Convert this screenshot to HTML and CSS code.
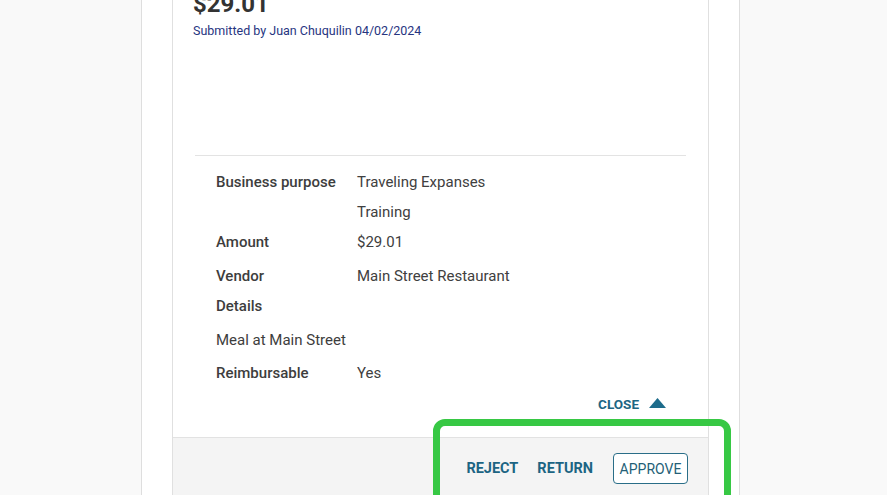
FILE: index.html
```html
<!DOCTYPE html>
<html lang="en">
<head>
<meta charset="utf-8">
<title>Expense approval</title>
<link rel="stylesheet" href="styles.css">
</head>
<body>
<div class="panel">
  <div class="card">
    <div class="card-head">
      <h1 class="amount">$29.01</h1>
      <p class="submitted">Submitted by Juan Chuquilin 04/02/2024</p>
    </div>
    <div class="divider"></div>
    <div class="details">
      <div class="row"><span class="label">Business purpose</span><span class="value">Traveling Expanses</span></div>
      <div class="row"><span class="label"></span><span class="value">Training</span></div>
      <div class="row"><span class="label">Amount</span><span class="value">$29.01</span></div>
      <div class="row gap"><span class="label">Vendor</span><span class="value">Main Street Restaurant</span></div>
      <div class="row"><span class="label">Details</span><span class="value"></span></div>
      <div class="row gap"><span class="plain">Meal at Main Street</span></div>
      <div class="row gap-s"><span class="label">Reimbursable</span><span class="value">Yes</span></div>
    </div>
    <div class="close-row">
      <button class="close-btn">CLOSE <svg class="caret" width="17" height="10" viewBox="0 0 17 10"><path d="M8.5 0 L17 10 L0 10 Z" fill="#1d6c8b"/></svg></button>
    </div>
    <div class="footer">
      <button class="act">REJECT</button>
      <button class="act">RETURN</button>
      <button class="approve">APPROVE</button>
    </div>
  </div>
</div>
<div class="highlight"></div>
</body>
</html>
```
FILE: styles.css
```css
html, body {
  margin: 0;
  padding: 0;
}
body {
  background: #f9f9f9;
  font-family: Roboto, "Liberation Sans", sans-serif;
  height: 495px;
  overflow: hidden;
  position: relative;
}
.panel {
  margin-left: 141px;
  width: 567px;
  height: 495px;
  background: #ffffff;
  border-left: 1px solid #dedede;
  border-right: 1px solid #dedede;
  padding-left: 30px;
  box-sizing: content-box;
}
.card {
  width: 535px;
  height: 560px;
  background: #ffffff;
  border-left: 1px solid #e0e0e0;
  border-right: 1px solid #e0e0e0;
  display: flex;
  flex-direction: column;
}
.card-head {
  padding-left: 20px;
  height: 155px;
}
.amount {
  margin: -10px 0 0 0;
  font-size: 24px;
  line-height: 28px;
  font-weight: 700;
  color: #333333;
}
.submitted {
  margin: 5px 0 0 0;
  font-size: 12.5px;
  line-height: 16px;
  color: #27357f;
}
.divider {
  height: 1px;
  background: #e3e3e3;
  margin: 0 22px;
}
.details {
  padding: 11px 0 0 43px;
}
.row {
  display: grid;
  grid-template-columns: 141px 1fr;
  height: 30px;
  line-height: 30px;
  font-size: 15px;
  color: #3b3b3b;
}
.row.gap { margin-top: 4px; }
.row.gap-s { margin-top: 3px; }
.label {
  font-weight: 500;
  color: #3d3d3d;
}
.value { color: #404040; }
.plain {
  grid-column: 1 / 3;
  color: #3d3d3d;
}
.close-row {
  display: flex;
  justify-content: flex-end;
  padding: 1px 42px 0 0;
  height: 30px;
}
.close-btn {
  background: none;
  border: 0;
  padding: 0;
  font-family: inherit;
  font-size: 13.5px;
  font-weight: 700;
  color: #1d6583;
  display: flex;
  align-items: center;
  gap: 10px;
  height: 30px;
  cursor: pointer;
}
.caret { margin-top: -3px; }
.footer {
  margin-top: 18px;
  flex: 1;
  background: #f4f4f4;
  border-top: 1px solid #e2e2e2;
  display: flex;
  justify-content: flex-end;
  align-items: flex-start;
  padding: 15px 20px 0 0;
  gap: 19px;
}
.act {
  background: none;
  border: 0;
  padding: 0;
  height: 31px;
  font-family: inherit;
  font-size: 14.5px;
  font-weight: 700;
  color: #1c6483;
  cursor: pointer;
  margin-top: 0;
}
.approve {
  height: 31px;
  width: 75px;
  padding: 0;
  margin-left: 1px;
  background: #ffffff;
  border: 1px solid #2a6e88;
  border-radius: 4px;
  font-family: inherit;
  font-size: 14px;
  color: #245f77;
  cursor: pointer;
}
.highlight {
  position: absolute;
  left: 433px;
  top: 419px;
  width: 284px;
  height: 120px;
  border: 7px solid #37c844;
  border-radius: 12px;
  pointer-events: none;
}
```
